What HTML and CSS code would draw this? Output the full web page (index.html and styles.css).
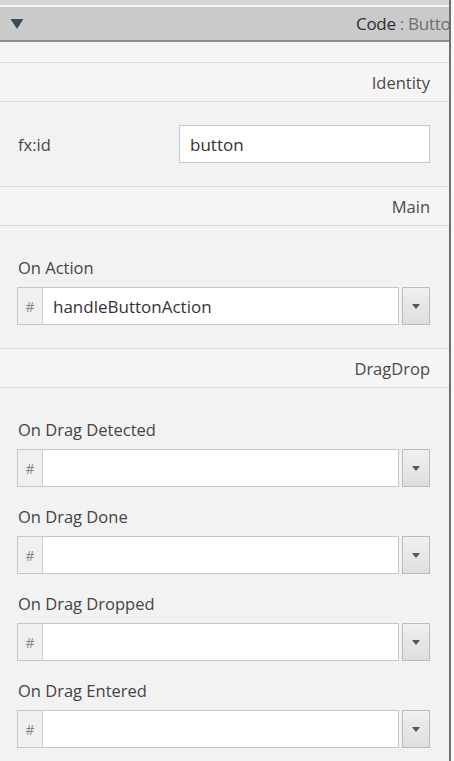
FILE: index.html
```html
<!DOCTYPE html>
<html>
<head>
<meta charset="utf-8">
<link rel="stylesheet" href="styles.css">
</head>
<body>
<div class="panel">
  <div class="topstrip"></div>
  <div class="header">
    <svg class="tri" width="22" height="20" viewBox="0 0 22 20"><path d="M3 3 L19 3 L11 16 Z" fill="#bfdde1" opacity="0.7"/><path d="M4.5 4 L17.5 4 L11 14 Z" fill="#3b4a55"/></svg>
    <div class="title"><span class="t-dark">Code</span><span class="t-light"> : Button</span></div>
  </div>
  <div class="spacer"></div>
  <div class="band">Identity</div>
  <div class="idrow">
    <span class="lbl">fx:id</span>
    <div class="textbox">button</div>
  </div>
  <div class="band">Main</div>
  <div class="section">
    <div class="field">
      <div class="flabel">On Action</div>
      <div class="combo">
        <div class="hash">#</div>
        <div class="cinput">handleButtonAction</div>
        <div class="cbtn"><span class="arrow"></span></div>
      </div>
    </div>
  </div>
  <div class="band">DragDrop</div>
  <div class="section drag">
    <div class="field">
      <div class="flabel">On Drag Detected</div>
      <div class="combo">
        <div class="hash">#</div>
        <div class="cinput"></div>
        <div class="cbtn"><span class="arrow"></span></div>
      </div>
    </div>
    <div class="field">
      <div class="flabel">On Drag Done</div>
      <div class="combo">
        <div class="hash">#</div>
        <div class="cinput"></div>
        <div class="cbtn"><span class="arrow"></span></div>
      </div>
    </div>
    <div class="field">
      <div class="flabel">On Drag Dropped</div>
      <div class="combo">
        <div class="hash">#</div>
        <div class="cinput"></div>
        <div class="cbtn"><span class="arrow"></span></div>
      </div>
    </div>
    <div class="field">
      <div class="flabel">On Drag Entered</div>
      <div class="combo">
        <div class="hash">#</div>
        <div class="cinput"></div>
        <div class="cbtn"><span class="arrow"></span></div>
      </div>
    </div>
  </div>
</div>
</body>
</html>
```
FILE: styles.css
```css
html, body {
  margin: 0;
  padding: 0;
  background: #f7f7f7;
  height: 761px;
  overflow: hidden;
}
body {
  font-family: "Open Sans", "Noto Sans", sans-serif;
  color: #3a3a3a;
}
.panel {
  width: 449px;
  height: 761px;
  background: #f2f2f2;
  border-right: 2px solid #6f6f6f;
  overflow: hidden;
}
.topstrip {
  height: 5px;
  background: #d6d6d6;
  border-bottom: 2px solid #f4f4f4;
}
.header {
  height: 33px;
  background: #cacaca;
  border-bottom: 2px solid #8c8c8c;
  display: flex;
  align-items: center;
  overflow: hidden;
}
.tri {
  margin-left: 6px;
  margin-top: 2px;
  flex: none;
}
.title {
  margin-left: auto;
  width: 93px;
  overflow: hidden;
  white-space: nowrap;
  font-size: 17px;
  letter-spacing: -0.3px;
  flex: none;
}
.t-dark { color: #2f2f2f; }
.t-light { color: #6f6f6f; }
.spacer {
  height: 20px;
  background: #f5f5f5;
  border-bottom: 1px solid #d9d9d9;
}
.band {
  height: 38px;
  background: #f5f5f5;
  border-bottom: 1px solid #d9d9d9;
  display: flex;
  align-items: center;
  justify-content: flex-end;
  padding-right: 19px;
  font-size: 16.5px;
  color: #4a4a4a;
}
.idrow {
  height: 84px;
  display: flex;
  align-items: center;
  padding: 0 19px 0 18px;
  border-bottom: 1px solid #d9d9d9;
}
.lbl {
  font-size: 16.5px;
  width: 161px;
  color: #444;
}
.textbox {
  flex: 1;
  height: 36px;
  background: #fff;
  border: 1px solid #c9c9c9;
  display: flex;
  align-items: center;
  padding-left: 10px;
  font-size: 17px;
  color: #333;
}
.section {
  padding: 29px 19px 23px 17px;
  border-bottom: 1px solid #d9d9d9;
}
.section.drag {
  border-bottom: none;
  padding-top: 29px;
}
.field {
  display: flex;
  flex-direction: column;
}
.field + .field {
  margin-top: 17px;
}
.flabel {
  font-size: 16.5px;
  color: #444;
  padding-left: 1px;
  height: 26px;
  line-height: 26px;
  margin-bottom: 6px;
}
.combo {
  display: flex;
  height: 38px;
}
.hash {
  width: 24px;
  border: 1px solid #c6c6c6;
  border-right: 1px solid #d0d0d0;
  background: #f0f0f0;
  display: flex;
  align-items: center;
  justify-content: center;
  font-size: 14px;
  color: #888;
}
.cinput {
  flex: 1;
  background: #fff;
  border: 1px solid #c6c6c6;
  border-left: none;
  display: flex;
  align-items: center;
  padding-left: 10px;
  font-size: 17px;
  color: #333;
}
.cbtn {
  width: 26px;
  margin-left: 3px;
  border: 1px solid #bcbcbc;
  background: linear-gradient(#f0f0f0, #dedede);
  display: flex;
  align-items: center;
  justify-content: center;
}
.arrow {
  width: 0;
  height: 0;
  border-left: 4px solid transparent;
  border-right: 4px solid transparent;
  border-top: 5px solid #555;
}
```
